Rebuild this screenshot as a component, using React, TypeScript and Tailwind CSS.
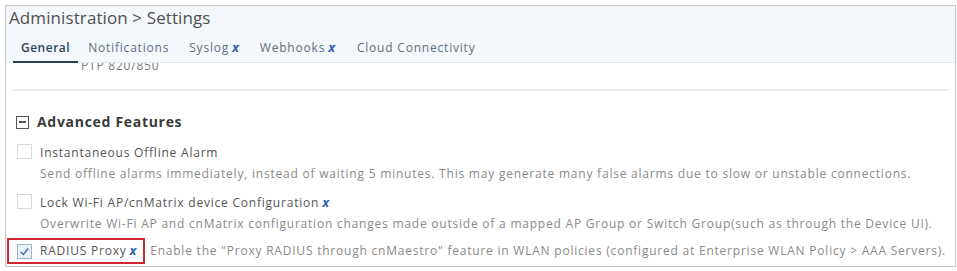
import React from "react";

const X = () => (
  <span className="ml-[3px] font-bold italic text-[#2f5fb3] text-[13px] leading-none">x</span>
);

const Box = ({ checked }: { checked?: boolean }) => (
  <span
    className={
      "flex h-[15px] w-[15px] shrink-0 items-center justify-center border " +
      (checked ? "border-[#9fb4cc] bg-[#e9f0f8]" : "border-[#d9d9d9] bg-white")
    }
  >
    {checked && (
      <svg width="11" height="11" viewBox="0 0 12 12">
        <path d="M2 6.5 L4.8 9.2 L10 2.8" fill="none" stroke="#3b6fb0" strokeWidth="1.6" />
      </svg>
    )}
  </span>
);

export default function App() {
  return (
    <div
      className="w-[957px] h-[271px] bg-white pt-[5px] pl-[5px] pr-[1px] overflow-hidden"
      style={{ fontFamily: '"Open Sans", "Liberation Sans", sans-serif' }}
    >
      <div className="h-[262px] border border-[#c4c4c4] overflow-hidden flex flex-col">
        <div className="h-[57px] shrink-0 bg-[#f4f7fb] border-b border-[#e3e7ec] relative z-10">
          <div className="pl-[3px] pt-[1px] text-[17px] leading-[22px] text-[#505050] tracking-[0.1px]">
            Administration &gt; Settings
          </div>
          <div className="mt-[11px] flex items-end pl-[7px] text-[12px] leading-[16px] text-[#5f6f82] tracking-[0.8px]">
            <div className="flex flex-col items-center">
              <span className="px-[8px] font-semibold text-[#2d4560] tracking-[0.5px]">General</span>
              <span className="mt-[5px] h-[2px] w-full bg-[#2c3e52]" />
            </div>
            <span className="ml-[10px] mb-[7px]">Notifications</span>
            <span className="ml-[20px] mb-[7px] flex items-baseline">
              Syslog
              <X />
            </span>
            <span className="ml-[20px] mb-[7px] flex items-baseline">
              Webhooks
              <X />
            </span>
            <span className="ml-[21px] mb-[7px]">Cloud Connectivity</span>
          </div>
        </div>
        <div className="flex-1 overflow-hidden tracking-[0.78px]">
          <div className="-mt-[4px] pl-[75px] text-[12px] leading-[14px] text-[#7a7a7a]">PTP 820/850</div>
          <div className="mx-[6px] mt-[16px] border-t-2 border-[#ededed]" />
          <div className="pl-[10px] pt-[23px] flex items-center tracking-[0.7px]">
            <span className="flex h-[13px] w-[13px] items-center justify-center border border-[#555]">
              <span className="h-[1.5px] w-[7px] bg-[#555]" />
            </span>
            <span className="ml-[8px] text-[14px] font-bold leading-[16px] text-[#3a3a3a]">Advanced Features</span>
          </div>
          <div className="pl-[11px] pt-[14px] flex">
            <Box />
            <div className="ml-[8px] text-[12px]">
              <div className="leading-[16px] pt-[1px] text-[#555]">Instantaneous Offline Alarm</div>
              <div className="mt-[5px] leading-[16px] text-[#8a8a8a]">
                Send offline alarms immediately, instead of waiting 5 minutes. This may generate many false alarms due to slow or unstable connections.
              </div>
            </div>
          </div>
          <div className="pl-[11px] pt-[12px] flex">
            <Box />
            <div className="ml-[8px] text-[12px]">
              <div className="leading-[16px] pt-[1px] text-[#555] flex items-baseline">
                Lock Wi-Fi AP/cnMatrix device Configuration
                <X />
              </div>
              <div className="mt-[5px] leading-[16px] text-[#8a8a8a]">
                Overwrite Wi-Fi AP and cnMatrix configuration changes made outside of a mapped AP Group or Switch Group(such as through the Device UI).
              </div>
            </div>
          </div>
          <div className="pl-[1px] pt-[6px] flex items-center text-[12px]">
            <div className="flex h-[26px] items-center border-2 border-[#d0262e] pl-[8px] pr-[6px]">
              <Box checked />
              <span className="ml-[8px] flex items-baseline text-[#555]">
                RADIUS Proxy
                <X />
              </span>
            </div>
            <span className="ml-[5px] text-[#8a8a8a] whitespace-nowrap">
              Enable the "Proxy RADIUS through cnMaestro" feature in WLAN policies (configured at Enterprise WLAN Policy &gt; AAA Servers).
            </span>
          </div>
        </div>
      </div>
    </div>
  );
}
